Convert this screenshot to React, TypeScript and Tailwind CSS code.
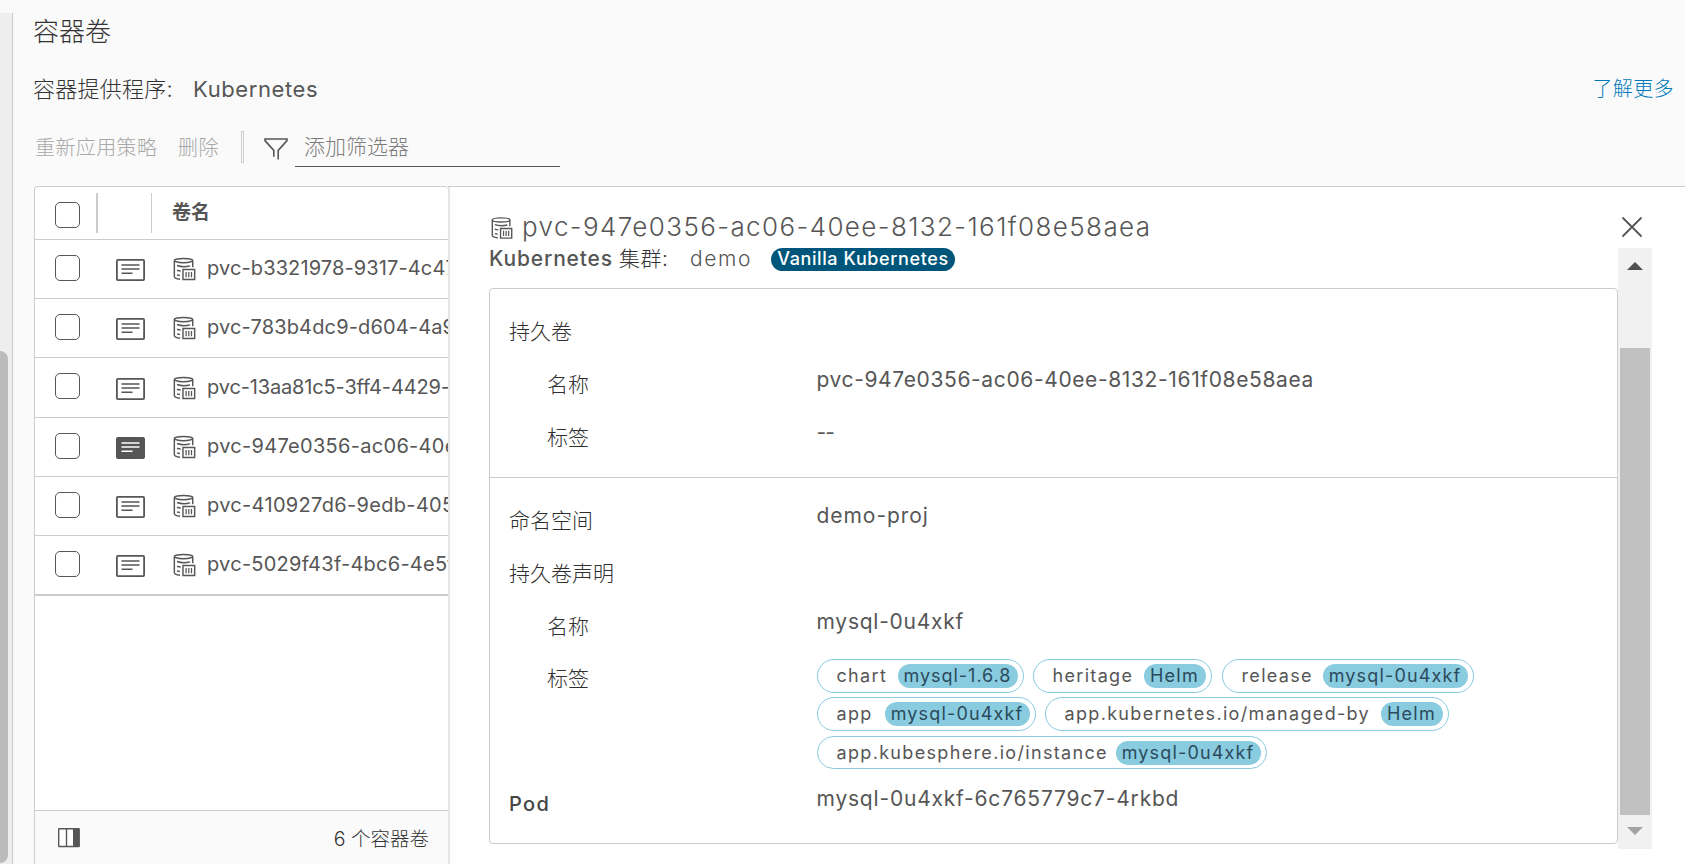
import type { ReactNode } from "react";

const volumes = [
  { name: "pvc-b3321978-9317-4c47", tracking: "tracking-[0.12px]", height: "h-[59px]" },
  { name: "pvc-783b4dc9-d604-4a9", tracking: "tracking-[0.15px]", height: "h-[59px]" },
  { name: "pvc-13aa81c5-3ff4-4429-", tracking: "tracking-[-0.15px]", height: "h-[60px]" },
  { name: "pvc-947e0356-ac06-40e", tracking: "tracking-[0.3px]", height: "h-[59px]", active: true },
  { name: "pvc-410927d6-9edb-405", tracking: "tracking-[0.32px]", height: "h-[59px]" },
  { name: "pvc-5029f43f-4bc6-4e5f", tracking: "tracking-[0.25px]", height: "h-[60px]", last: true },
];

function StorageIcon({ className }: { className: string }) {
  return (
    <svg className={className} viewBox="0 0 24 24" fill="none" stroke="#565656" strokeWidth="1.5">
      <ellipse cx="11" cy="3.2" rx="9.6" ry="2.2" />
      <path d="M1.4 3.3v16.6c0 1.4 2.4 2.5 6 2.8M20.6 3.3v6.9" />
      <path d="M4.2 8.4c3.8 1.3 9.4 1.4 13.6.3M4.2 13.3c1.2.5 2.2.7 3.8.8M4.2 18.2c1 .4 1.8.5 3 .6" />
      <path d="M10.4 12.6h12.2v10.4H10.4z" />
      <path d="M13.7 15v5.6M16.5 15v5.6M19.3 15v5.6" strokeWidth="1.3" />
    </svg>
  );
}

function DetailIcon({ active }: { active?: boolean }) {
  return (
    <svg className="ml-[21px] h-[22px] w-[29px] shrink-0" viewBox="0 0 29 22" fill="none">
      <rect x=".9" y=".9" width="27.2" height="20.2" rx="1" fill={active ? "#565656" : "#fff"} stroke="#565656" strokeWidth="1.8" />
      <path d="M5.5 6h18M5.5 10h18M5.5 14.2h11" stroke={active ? "#fff" : "#565656"} strokeWidth="1.6" />
    </svg>
  );
}

function Checkbox({ className }: { className: string }) {
  return <span className={`ml-5 h-[26px] w-[25px] shrink-0 rounded-[5px] border border-[#565656] bg-white ${className}`} />;
}

function Tag({ name, value, className, inner }: { name: string; value: string; className: string; inner: string }) {
  return (
    <div className={`flex shrink-0 items-center justify-between rounded-full border border-[#89cbdf] pr-[5px] pl-[19px] ${className}`}>
      <span className="tracking-[1.33px]">{name}</span>
      <span className={`flex h-6 items-center justify-center rounded-full bg-[#89cbdf] text-[#2b4a5b] ${inner}`}>{value}</span>
    </div>
  );
}

function Label({ children, indent }: { children: ReactNode; indent?: boolean }) {
  return (
    <div className={`w-[307.5px] shrink-0 text-[21px] leading-[53px] font-light text-[#2f2f2f] ${indent ? "pl-[38px]" : ""}`}>
      {children}
    </div>
  );
}

export default function App() {
  return (
    <div className="flex h-[864px] w-[1685px] overflow-hidden bg-[#fafafa] font-['Inter','Noto_Sans_CJK_SC',sans-serif] text-[#565656]">
      <div className="mt-[13px] flex w-[13px] shrink-0 flex-col border-r border-[#ccc] bg-[#eee]">
        <div className="mt-[338px] h-[512px] w-2 rounded-r-lg bg-[#bbb]" />
      </div>

      <div className="flex min-w-0 flex-1 flex-col pl-[21px]">
        <h1 className="mt-3 -ml-px h-[39px] text-[26px] leading-10 font-light whitespace-nowrap text-[#333]">容器卷</h1>

        <div className="mt-[22px] flex h-8 items-center justify-between pr-[11px]">
          <div className="flex items-center leading-8">
            <span className="-ml-px w-[160px] text-[22px] font-light tracking-[0.25px] text-[#333]">容器提供程序:</span>
            <span className="text-[22px] tracking-[0.6px]">Kubernetes</span>
          </div>
          <a className="text-[20px] font-light tracking-[0.4px] text-[#0079b8]">了解更多</a>
        </div>

        <div className="mt-[26px] flex h-9 items-start">
          <span className="ml-px w-[143px] text-[20px] leading-[34px] font-light tracking-[0.4px] text-[#a8a8a8]">重新应用策略</span>
          <span className="w-[63px] text-[20px] leading-[34px] font-light tracking-[0.4px] text-[#a8a8a8]">删除</span>
          <span className="h-8 w-[3px] border border-[#ccc] bg-white" />
          <svg className="mt-[7px] ml-5 h-[22px] w-6" viewBox="0 0 24 22" fill="none" stroke="#565656" strokeWidth="1.6">
            <path d="M9.8 18.8v-6.4L1 2.6V1h22v1.6l-8.8 9.8v9.2" />
          </svg>
          <span className="ml-[7px] h-9 w-[265px] border-b border-[#565656] pl-[9px] text-[21px] leading-8 font-light text-[#7c7c7c]">
            添加筛选器
          </span>
        </div>

        <div className="mt-[19px] flex flex-1">
          <section className="flex w-[414px] shrink-0 flex-col overflow-hidden rounded-t border-t border-l border-[#ccc] bg-white">
            <div className="flex h-[53px] shrink-0 items-center border-b border-[#ccc]">
              <Checkbox className="mt-[3px]" />
              <span className="ml-4 h-10 w-0.5 bg-[#ccc]" />
              <span className="ml-[53px] h-10 w-px bg-[#ccc]" />
              <span className="mt-px ml-5 text-[19px] font-bold">卷名</span>
            </div>
            {volumes.map((v) => (
              <div
                key={v.name}
                className={`flex shrink-0 items-center border-[#ccc] ${v.height} ${v.last ? "border-b-2" : "border-b"}`}
              >
                <Checkbox className="-mt-[3px]" />
                <span className="ml-[15px] h-[42px] w-px bg-[#ccc]" />
                <span className="mt-[2px] flex"><DetailIcon active={v.active} /></span>
                <StorageIcon className="ml-7 h-6 w-[23px] shrink-0" />
                <span className={`-mt-0.5 ml-[11px] text-[20px] font-[380] whitespace-nowrap text-[#565656] ${v.tracking}`}>{v.name}</span>
              </div>
            ))}
            <div className="mt-auto flex h-[54px] shrink-0 items-center justify-between border-t border-[#ccc] bg-[#fafafa] pr-[19px] pl-[23px]">
              <svg className="h-5 w-[22px]" viewBox="0 0 22 20" fill="none">
                <rect x=".7" y=".7" width="20.4" height="17.8" rx=".5" fill="#fff" stroke="#565656" strokeWidth="1.4" />
                <path d="M8.5 1v18" stroke="#565656" strokeWidth="1.4" />
                <path d="M15 .5h6.5v18.5H15z" fill="#565656" />
              </svg>
              <span className="mt-1 text-[19.5px] font-light text-[#333]">6 个容器卷</span>
            </div>
          </section>

          <section className="flex min-w-0 flex-1 flex-col border-t border-[#ccc] bg-white">
            <div className="flex flex-1 border-l-2 border-[#e5e5e5]">
              <div className="flex w-[1168px] shrink-0 flex-col pl-[39px]">
                <div className="mt-[22px] flex h-[35px] items-center">
                  <StorageIcon className="mt-[3px] ml-0.5 h-6 w-[22px] shrink-0" />
                  <h2 className="ml-[9px] text-[26px] leading-9 font-light tracking-[1.39px] whitespace-nowrap">
                    pvc-947e0356-ac06-40ee-8132-161f08e58aea
                  </h2>
                </div>
                <div className="flex h-[30px] items-center whitespace-nowrap">
                  <span className="w-[130px] text-[21px] font-medium tracking-[0.82px]">Kubernetes</span>
                  <span className="w-[71px] text-[21px] font-light tracking-[0.5px] text-[#333]">集群:</span>
                  <span className="w-[81px] text-[21px] font-light tracking-[1.6px]">demo</span>
                  <span className="flex h-[23px] w-[184px] items-center justify-center rounded-full bg-[#00567a] text-[18px] leading-none font-medium tracking-[0.6px] text-white">
                    Vanilla Kubernetes
                  </span>
                </div>

                <div className="mt-[14px] flex h-[556px] w-[1129px] flex-col rounded border border-[#ccc]">
                  <div className="flex h-[189px] shrink-0 flex-col border-b border-[#ccc] pt-4 pl-[19px]">
                    <div className="flex h-[53px]"><Label>持久卷</Label></div>
                    <div className="flex h-[53px]">
                      <Label indent>名称</Label>
                      <span className="text-[21px] leading-[43px] font-[370] tracking-[0.62px]">pvc-947e0356-ac06-40ee-8132-161f08e58aea</span>
                    </div>
                    <div className="flex h-[53px]">
                      <Label indent>标签</Label>
                      <span className="text-[21px] leading-[44px] tracking-[-1px]">--</span>
                    </div>
                  </div>
                  <div className="flex flex-col pt-4 pl-[19px]">
                    <div className="flex h-[53px]">
                      <Label>命名空间</Label>
                      <span className="text-[21px] leading-[43px] font-[370] tracking-[0.95px]">demo-proj</span>
                    </div>
                    <div className="flex h-[53px]"><Label>持久卷声明</Label></div>
                    <div className="flex h-[52px]">
                      <Label indent>名称</Label>
                      <span className="text-[21px] leading-[43px] font-[370] tracking-[0.75px]">mysql-0u4xkf</span>
                    </div>
                    <div className="flex h-[125px]">
                      <Label indent>标签</Label>
                      <div className="flex flex-col gap-1 pt-[7px] text-[18px] leading-none font-[380] whitespace-nowrap">
                        <div className="flex gap-[9px]">
                          <Tag name="chart" value="mysql-1.6.8" className="h-[34px] w-[207px]" inner="w-[120px] tracking-[0.97px]" />
                          <Tag name="heritage" value="Helm" className="h-[34px] w-[179px]" inner="w-[62px] tracking-[1.3px]" />
                          <Tag name="release" value="mysql-0u4xkf" className="ml-px h-[34px] w-[252px]" inner="w-[145px] tracking-[1.15px]" />
                        </div>
                        <div className="flex gap-[9px]">
                          <Tag name="app" value="mysql-0u4xkf" className="h-[34px] w-[219px]" inner="w-[145px] tracking-[1.15px]" />
                          <Tag name="app.kubernetes.io/managed-by" value="Helm" className="h-[34px] w-[404px]" inner="w-[62px] tracking-[1.3px]" />
                        </div>
                        <div className="mt-px flex">
                          <Tag name="app.kubesphere.io/instance" value="mysql-0u4xkf" className="h-[33px] w-[450px]" inner="w-[145px] tracking-[1.15px]" />
                        </div>
                      </div>
                    </div>
                    <div className="flex h-[53px]">
                      <div className="w-[307.5px] text-[20px] leading-[55px] font-medium tracking-[1.3px] text-[#454545]">Pod</div>
                      <span className="text-[21px] leading-[43px] font-[370] tracking-[0.8px]">mysql-0u4xkf-6c765779c7-4rkbd</span>
                    </div>
                  </div>
                </div>
              </div>

              <div className="flex w-[34px] flex-col items-center">
                <svg className="mt-[29px] -ml-[6px] h-[22px] w-[22px] shrink-0" viewBox="0 0 22 22" stroke="#565656" strokeWidth="1.8" strokeLinecap="round">
                  <path d="M2 2l18 18M20 2L2 20" />
                </svg>
                <div className="mt-[10px] flex h-[601px] w-[34px] flex-col items-center bg-[#f1f1f1]">
                  <svg className="mt-[14px] h-2 w-4 shrink-0" viewBox="0 0 16 8" fill="#505050"><path d="M8 0l8 8H0z" /></svg>
                  <div className="mt-[78px] h-[467px] w-[30px] shrink-0 bg-[#c1c1c1]" />
                  <svg className="mt-3 h-2 w-4 shrink-0" viewBox="0 0 16 8" fill="#a3a3a3"><path d="M8 8l8-8H0z" /></svg>
                </div>
              </div>
            </div>
          </section>
        </div>
      </div>
    </div>
  );
}
